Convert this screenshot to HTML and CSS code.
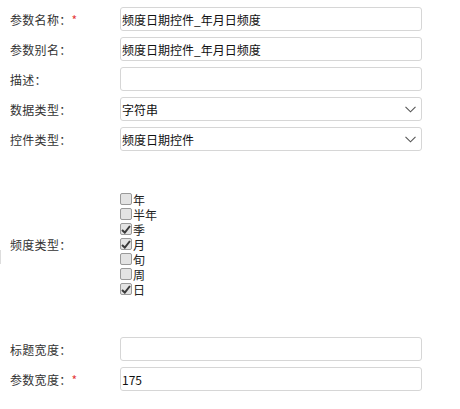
FILE: index.html
```html
<!DOCTYPE html>
<html lang="zh-CN">
<head>
    <meta charset="UTF-8">
    <title>参数设置</title>
    <link rel="stylesheet" href="styles.css">
</head>
<body>
    <div class="edge"></div>
    <div class="form">
        <div class="row">
            <label class="label">参数名称：<span class="req">*</span></label>
            <div class="input">频度日期控件_年月日频度</div>
        </div>
        <div class="row">
            <label class="label">参数别名：</label>
            <div class="input">频度日期控件_年月日频度</div>
        </div>
        <div class="row">
            <label class="label">描述：</label>
            <div class="input"></div>
        </div>
        <div class="row">
            <label class="label">数据类型：</label>
            <div class="input select">
                <span>字符串</span>
                <svg width="11" height="7" viewBox="0 0 11 7"><path d="M0.5 0.8 L5.5 5.8 L10.5 0.8" fill="none" stroke="#555" stroke-width="1.1"/></svg>
            </div>
        </div>
        <div class="row">
            <label class="label">控件类型：</label>
            <div class="input select">
                <span>频度日期控件</span>
                <svg width="11" height="7" viewBox="0 0 11 7"><path d="M0.5 0.8 L5.5 5.8 L10.5 0.8" fill="none" stroke="#555" stroke-width="1.1"/></svg>
            </div>
        </div>
        <div class="row tall">
            <label class="label">频度类型：</label>
            <div class="checks">
                <div class="check"><span class="box"></span><span class="txt">年</span></div>
                <div class="check"><span class="box"></span><span class="txt">半年</span></div>
                <div class="check"><span class="box on"><svg width="10" height="9" viewBox="0 0 10 9"><path d="M1 5 L3.8 7.6 L9 1" fill="none" stroke="#3a3a3a" stroke-width="2"/></svg></span><span class="txt">季</span></div>
                <div class="check"><span class="box on"><svg width="10" height="9" viewBox="0 0 10 9"><path d="M1 5 L3.8 7.6 L9 1" fill="none" stroke="#3a3a3a" stroke-width="2"/></svg></span><span class="txt">月</span></div>
                <div class="check"><span class="box"></span><span class="txt">旬</span></div>
                <div class="check"><span class="box"></span><span class="txt">周</span></div>
                <div class="check"><span class="box on"><svg width="10" height="9" viewBox="0 0 10 9"><path d="M1 5 L3.8 7.6 L9 1" fill="none" stroke="#3a3a3a" stroke-width="2"/></svg></span><span class="txt">日</span></div>
            </div>
        </div>
        <div class="row">
            <label class="label">标题宽度：</label>
            <div class="input"></div>
        </div>
        <div class="row">
            <label class="label">参数宽度：<span class="req">*</span></label>
            <div class="input">175</div>
        </div>
    </div>
</body>
</html>
```

FILE: styles.css
```css
body {
    margin: 0;
    padding: 4px 0 0 0;
    background: #fff;
    font-family: "Noto Sans CJK SC", "Liberation Sans", sans-serif;
    font-size: 12px;
    color: #333;
}
.edge {
    position: absolute;
    left: 0;
    top: 250px;
    width: 1px;
    height: 14px;
    background: #ddd;
}
.form {
    display: flex;
    flex-direction: column;
}
.row {
    display: flex;
    align-items: center;
    height: 30px;
}
.row.tall {
    height: 180px;
}
.label {
    width: 120px;
    padding-left: 10px;
    box-sizing: border-box;
    white-space: nowrap;
    letter-spacing: 0.3px;
}
.req {
    color: #e4393c;
}
.input {
    width: 302px;
    height: 24px;
    box-sizing: border-box;
    border: 1px solid #d6d6d6;
    border-radius: 3px;
    padding: 0 0 0 1px;
    display: flex;
    align-items: center;
    color: #111;
    font-size: 12px;
}
.select {
    justify-content: space-between;
    padding-right: 5px;
}
.checks {
    display: flex;
    flex-direction: column;
}
.check {
    display: flex;
    align-items: center;
    height: 15px;
    color: #222;
}
.txt {
    display: block;
    height: 15px;
    line-height: 15px;
    overflow: hidden;
}
.box {
    width: 12px;
    height: 12px;
    box-sizing: border-box;
    border: 1px solid #9a9a9a;
    border-radius: 2px;
    background: #e3e3e3;
    margin-right: 1px;
    display: flex;
    align-items: center;
    justify-content: center;
}
```
